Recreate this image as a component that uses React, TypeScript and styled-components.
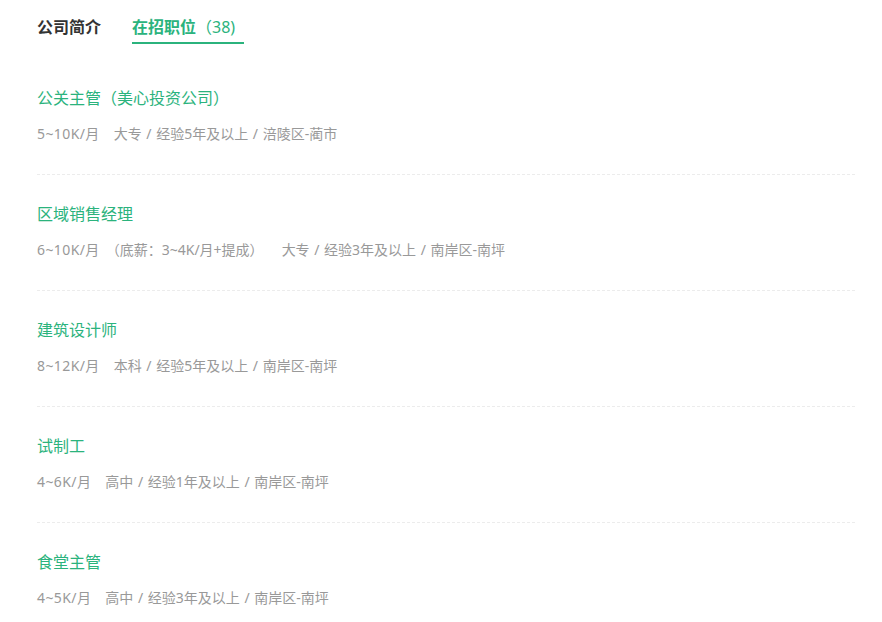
import styled, { createGlobalStyle } from "styled-components";

interface Job {
  title: string;
  salary: string;
  extra?: string;
  detail: string;
}

const jobs: Job[] = [
  {
    title: "公关主管（美心投资公司）",
    salary: "5~10K/月",
    detail: "大专 / 经验5年及以上 / 涪陵区-蔺市",
  },
  {
    title: "区域销售经理",
    salary: "6~10K/月",
    extra: "（底薪：3~4K/月+提成）",
    detail: "大专 / 经验3年及以上 / 南岸区-南坪",
  },
  {
    title: "建筑设计师",
    salary: "8~12K/月",
    detail: "本科 / 经验5年及以上 / 南岸区-南坪",
  },
  {
    title: "试制工",
    salary: "4~6K/月",
    detail: "高中 / 经验1年及以上 / 南岸区-南坪",
  },
  {
    title: "食堂主管",
    salary: "4~5K/月",
    detail: "高中 / 经验3年及以上 / 南岸区-南坪",
  },
];

export default function App() {
  return (
    <>
      <GlobalStyle />
      <StPage>
        <StTabs>
          <StTab>公司简介</StTab>
          <StTab $active>
            在招职位<StCount>（38)</StCount>
          </StTab>
        </StTabs>
        <StJobList>
          {jobs.map((job) => (
            <StJobItem key={job.title}>
              <StJobTitle>{job.title}</StJobTitle>
              <StJobMeta>
                <StSalary>{job.salary}</StSalary>
                {job.extra && <StExtra>{job.extra}</StExtra>}
                <StDetail $wide={!!job.extra}>{job.detail}</StDetail>
              </StJobMeta>
            </StJobItem>
          ))}
        </StJobList>
      </StPage>
    </>
  );
}

const GlobalStyle = createGlobalStyle`
  body {
    margin: 0;
    background: #fff;
    font-family: "Noto Sans", "Noto Sans CJK SC", sans-serif;
  }
`;

const StPage = styled.div`
  width: 818px;
  padding: 15px 0 0 37px;
`;

const StTabs = styled.div`
  display: flex;
  align-items: flex-end;
  gap: 31px;
`;

const StTab = styled.div<{ $active?: boolean }>`
  font-size: 16px;
  line-height: 24px;
  font-weight: 700;
  padding: 0 ${(p) => (p.$active ? "9px" : "0")} 3px 0;
  color: ${(p) => (p.$active ? "#2bb37d" : "#333")};
  border-bottom: 2px solid ${(p) => (p.$active ? "#2bb37d" : "transparent")};
  cursor: pointer;
`;

const StCount = styled.span`
  font-weight: 400;
`;

const StJobList = styled.ul`
  list-style: none;
  margin: 15px 0 0;
  padding: 0;
`;

const StJobItem = styled.li`
  padding: 27px 0 30px;
  border-bottom: 1px dashed #ececec;
`;

const StJobTitle = styled.div`
  font-size: 16px;
  line-height: 24px;
  color: #2bb37d;
`;

const StJobMeta = styled.div`
  display: flex;
  margin-top: 14px;
  font-size: 14px;
  line-height: 20px;
  color: #999;
  word-spacing: 1px;
`;

const StSalary = styled.span`
  letter-spacing: 0.4px;
`;

const StExtra = styled.span`
  margin-left: 6px;
`;

const StDetail = styled.span<{ $wide?: boolean }>`
  margin-left: ${(p) => (p.$wide ? "18px" : "14px")};
`;
